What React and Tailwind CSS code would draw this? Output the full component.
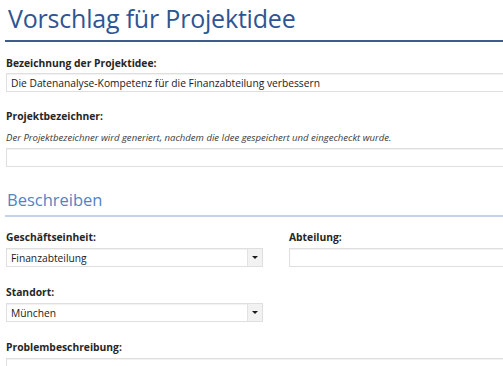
import React from "react";

function Label({ children }) {
  return (
    <div className="text-[10.3px] font-bold leading-[14px] text-[#262626]">{children}</div>
  );
}

function TextBox({ value, className = "" }) {
  return (
    <div
      className={`border border-[#dfdfdf] bg-white px-[4px] text-[10.25px] leading-[18px] text-[#1a1a1a] shadow-[inset_0_1px_1px_rgba(0,0,0,0.06)] ${className}`}
    >
      {value}
    </div>
  );
}

function Select({ value }) {
  return (
    <div className="flex h-[19px] w-[257px] border border-[#dfdfdf] bg-white shadow-[inset_0_1px_1px_rgba(0,0,0,0.06)]">
      <div className="flex-1 px-[4px] text-[10.25px] leading-[18px] text-[#1a1a1a]">{value}</div>
      <div className="flex w-[15px] items-center justify-center border-l border-[#e2e2e2] bg-[#f2f2f2]">
        <svg width="6" height="3" viewBox="0 0 6 3">
          <path d="M0 0h6L3 3z" fill="#1a1a1a" />
        </svg>
      </div>
    </div>
  );
}

export default function App() {
  return (
    <div className="h-[366px] w-[503px] overflow-hidden bg-white font-['Open_Sans',sans-serif]">
      <div className="w-[560px] pl-[5px]">
        {/* Title */}
        <h1 className="border-b-2 border-[#3b5e8e] pb-[9px] pl-[3px] pt-[6px] text-[25px] leading-[25px] tracking-[-0.2px] text-[#2e5593]">
          Vorschlag für Projektidee
        </h1>

        <div className="pl-[1px]">
          <div className="mt-[14px]">
            <Label>Bezeichnung der Projektidee:</Label>
            <TextBox
              className="mt-[3px] h-[19px]"
              value="Die Datenanalyse-Kompetenz für die Finanzabteilung verbessern"
            />
          </div>

          <div className="mt-[17px]">
            <Label>Projektbezeichner:</Label>
            <div className="mt-[8px] text-[9.55px] italic leading-[13px] text-[#3a3a3a]">
              Der Projektbezeichner wird generiert, nachdem die Idee gespeichert und eingecheckt wurde.
            </div>
            <TextBox className="mt-[4px] h-[19px]" value="" />
          </div>
        </div>

        {/* Section */}
        <h2 className="mt-[23px] border-b-2 border-[#c3d4ea] pb-[5px] pl-[2px] text-[16.5px] leading-[20px] text-[#5283c4]">
          Beschreiben
        </h2>

        <div className="pl-[1px]">
          <div className="mt-[13px] flex gap-[26px]">
            <div>
              <Label>Geschäftseinheit:</Label>
              <div className="mt-[4px]">
                <Select value="Finanzabteilung" />
              </div>
            </div>
            <div className="flex-1">
              <Label>Abteilung:</Label>
              <TextBox className="mt-[4px] h-[19px]" value="" />
            </div>
          </div>

          <div className="mt-[18px]">
            <Label>Standort:</Label>
            <div className="mt-[4px]">
              <Select value="München" />
            </div>
          </div>

          <div className="mt-[18px]">
            <Label>Problembeschreibung:</Label>
            <TextBox className="mt-[4px] h-[40px]" value="" />
          </div>
        </div>
      </div>
    </div>
  );
}
